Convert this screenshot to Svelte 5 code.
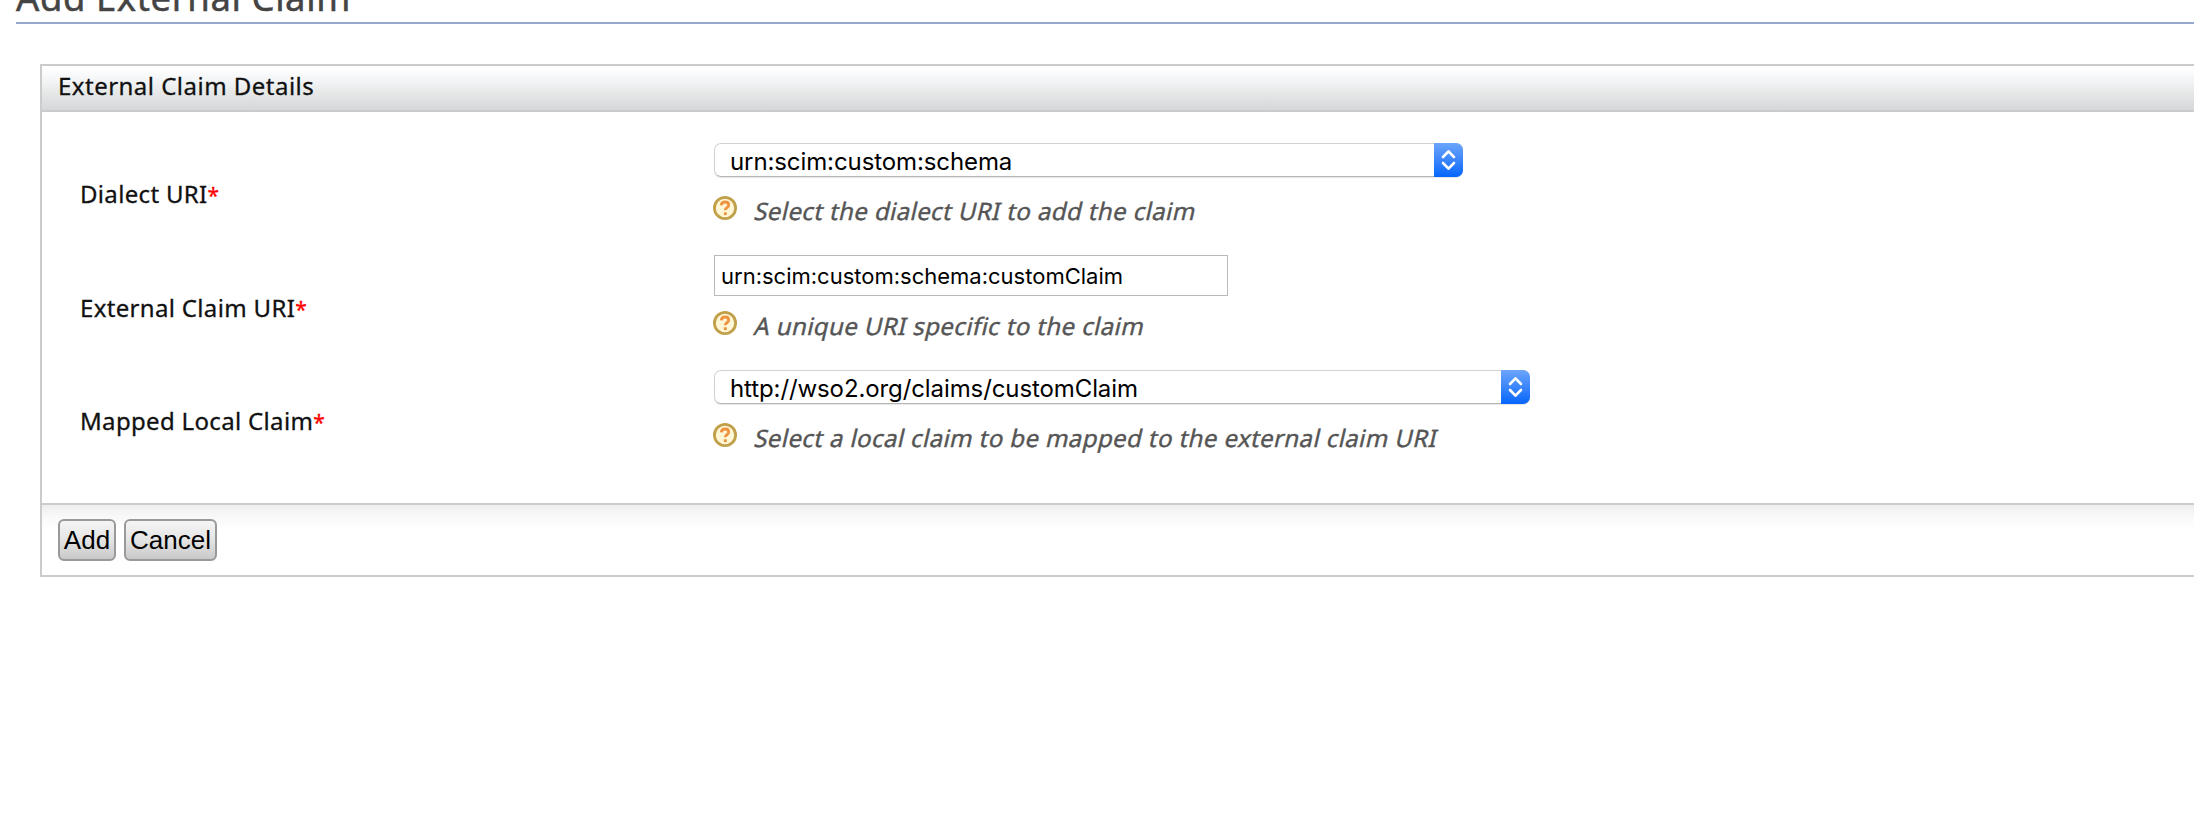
<script>
  const rows = [
    { label: 'Dialect URI', kind: 'select', value: 'urn:scim:custom:schema', help: 'Select the dialect URI to add the claim', cls: 'dialect' },
    { label: 'External Claim URI', kind: 'text', value: 'urn:scim:custom:schema:customClaim', help: 'A unique URI specific to the claim', cls: 'external' },
    { label: 'Mapped Local Claim', kind: 'select', value: 'http://wso2.org/claims/customClaim', help: 'Select a local claim to be mapped to the external claim URI', cls: 'mapped' }
  ];
</script>

<main>
  <h2>Add External Claim</h2>
  <section class="panel">
    <header>External Claim Details</header>
    <div class="body">
      {#each rows as row}
        <div class="row {row.cls}">
          <div class="label">{row.label}<span class="req">*</span></div>
          <div class="field">
            {#if row.kind === 'select'}
              <div class="select">
                <span class="value">{row.value}</span>
                <span class="stepper">
                  <svg width="29" height="34" viewBox="0 0 29 34" fill="none" stroke="#fff" stroke-width="2.6" stroke-linecap="round" stroke-linejoin="round">
                    <path d="M9 14 14.5 8.3 20 14M9 20 14.5 25.7 20 20" />
                  </svg>
                </span>
              </div>
            {:else}
              <div class="input">{row.value}</div>
            {/if}
            <div class="help">
              <svg width="24" height="24" viewBox="0 0 24 24">
                <circle cx="12" cy="12" r="10.6" fill="#fff6d5" stroke="#c0a04a" stroke-width="2.8" />
                <path d="M8.300 9.300c.2-2.300 1.700-3.300 3.700-3.300 2.200 0 3.700 1.200 3.700 3 0 2.600-3.400 2.700-3.400 5.300" fill="none" stroke="#ee9440" stroke-width="2.8" />
                <rect x="10.9" y="16.3" width="2.9" height="2.8" fill="#ee9440" />
              </svg>
              <span class="hint">{row.help}</span>
            </div>
          </div>
        </div>
      {/each}
    </div>
    <footer>
      <button type="button">Add</button>
      <button type="button">Cancel</button>
    </footer>
  </section>
</main>

<style>
  :global(body) { margin: 0; background: #fff; overflow: hidden; }
  main { height: 836px; overflow: hidden; padding-left: 16px; font-family: 'Noto Sans', sans-serif; font-size: 24px; color: #111; white-space: nowrap; }
  h2 { margin: -28px 0 0; height: 50px; line-height: 50px; border-bottom: 2px solid #96a8cb; font-size: 36.5px; font-weight: 400; letter-spacing: .57px; color: #444; -webkit-text-stroke: .5px; }
  .panel { margin: 40px 0 0 24px; border: 2px solid #ccc; border-right: 0; }
  header { box-sizing: border-box; height: 46px; line-height: 40px; padding-left: 16px; letter-spacing: .48px; border-bottom: 2px solid #cacbcc; background: linear-gradient(#fff 5%, #f2f3f5 36%, #e9ebea 55%, #dcdddf 85%, #d7d8da); -webkit-text-stroke: .3px; }
  .body { box-sizing: border-box; height: 391px; padding: 31px 0 0 38px; }
  .row { display: grid; grid-template-columns: 634px auto; }
  .dialect { height: 112px; }
  .external { height: 115px; }
  .label { padding-top: 35px; line-height: 32px; letter-spacing: .33px; -webkit-text-stroke: .3px; }
  .external .label { padding-top: 37px; }
  .req { color: #f00; font-size: 21px; line-height: 1; }
  .select { display: flex; box-sizing: border-box; width: 749px; height: 34px; border: 1px solid #d2d2d2; border-bottom-color: #b5b5b5; border-radius: 7px; box-shadow: 0 1px 1px #0000001a; font-family: Inter, sans-serif; font-size: 24px; letter-spacing: -.1px; color: #000; }
  .mapped .select { width: 816px; }
  .value { flex: 1; padding-left: 15px; line-height: 35px; }
  .stepper { width: 29px; height: 34px; margin: -1px; border-radius: 0 7px 7px 0; background: linear-gradient(#6ca5fb, #3c86fb 50%, #0566fc); }
  svg { display: block; flex: none; }
  .input { box-sizing: border-box; width: 514px; height: 41px; padding-left: 6px; border: 1px solid #b9b9b9; line-height: 40px; font-family: Inter, sans-serif; font-size: 22px; color: #000; }
  .help { display: flex; gap: 15.5px; margin: 19px 0 0 -1px; line-height: 30px; height: 24px; letter-spacing: .41px; color: #555; -webkit-text-stroke: .4px; }
  .hint { transform: skewX(-13deg); transform-origin: 0 24px; }
  .external .help { margin-top: 15px; }
  footer { display: flex; gap: 8px; box-sizing: border-box; height: 72px; padding: 14px 0 0 16px; border-top: 2px solid #ccc; background: linear-gradient(#eee, #f8f9f8 12px, #fff 24px); }
  button { box-sizing: border-box; width: 58px; height: 42px; padding: 0; border: 2px solid #999; border-radius: 6px; background: linear-gradient(#f5f5f5, #e4e4e4 50%, #c9c9c9); font: 26px/38px 'Liberation Sans', Arial, sans-serif; color: #000; }
  button + button { width: 93px; }
</style>
